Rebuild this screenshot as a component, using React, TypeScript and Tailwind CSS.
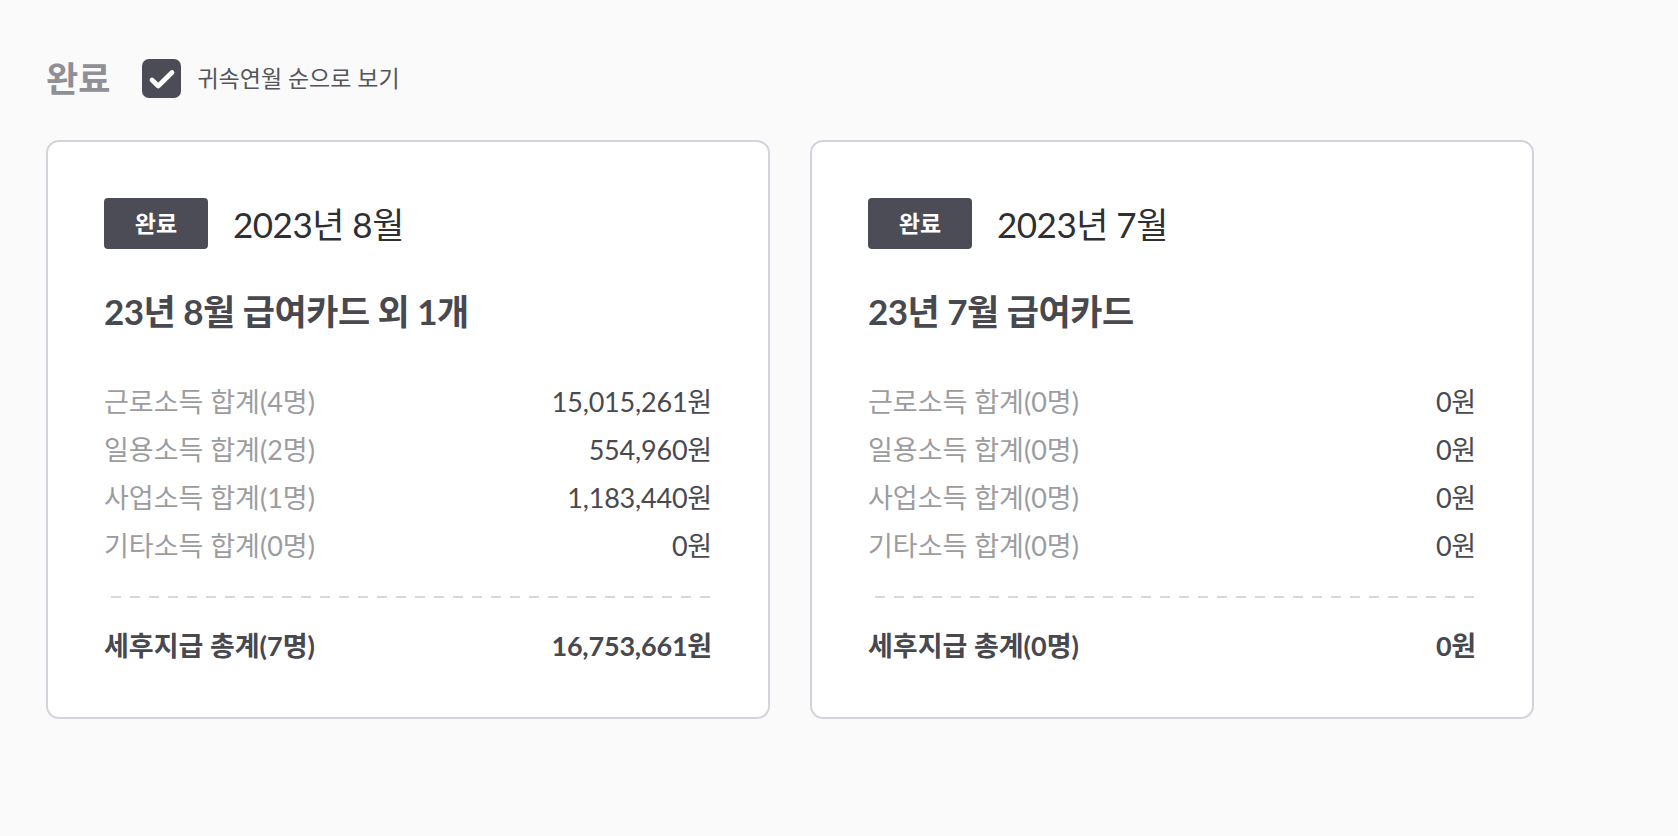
import React from "react";

type Row = { label: string; value: string };

type Card = {
  month: string;
  title: string;
  rows: Row[];
  totalLabel: string;
  total: string;
};

const cards: Card[] = [
  {
    month: "2023년 8월",
    title: "23년 8월 급여카드 외 1개",
    rows: [
      { label: "근로소득 합계(4명)", value: "15,015,261원" },
      { label: "일용소득 합계(2명)", value: "554,960원" },
      { label: "사업소득 합계(1명)", value: "1,183,440원" },
      { label: "기타소득 합계(0명)", value: "0원" },
    ],
    totalLabel: "세후지급 총계(7명)",
    total: "16,753,661원",
  },
  {
    month: "2023년 7월",
    title: "23년 7월 급여카드",
    rows: [
      { label: "근로소득 합계(0명)", value: "0원" },
      { label: "일용소득 합계(0명)", value: "0원" },
      { label: "사업소득 합계(0명)", value: "0원" },
      { label: "기타소득 합계(0명)", value: "0원" },
    ],
    totalLabel: "세후지급 총계(0명)",
    total: "0원",
  },
];

function PayCard({ card }: { card: Card }) {
  return (
    <div className="w-[724px] rounded-[13px] border-2 border-[#d3d3dc] bg-white pl-[56px] pr-[56px] pt-[56px] pb-[52px]">
      <div className="flex items-center gap-[25px]">
        <span className="flex h-[51px] w-[104px] items-center justify-center rounded-[4px] bg-[#4c4c56] text-[23px] font-bold text-white">
          완료
        </span>
        <span className="text-[35px] leading-[40px] tracking-[-0.5px] text-[#2f2f33]">{card.month}</span>
      </div>

      <h2 className="mt-[42px] text-[35px] font-bold leading-[40px] tracking-[-0.5px] text-[#48484f]">
        {card.title}
      </h2>

      <div className="mt-[52px] flex flex-col gap-[10px]">
        {card.rows.map((r) => (
          <div key={r.label} className="flex items-center justify-between text-[27px] leading-[38px]">
            <span className="text-[#9c9c9f]">{r.label}</span>
            <span className="tracking-[-0.2px] text-[#4a4a4e]">{r.value}</span>
          </div>
        ))}
      </div>

      <div className="mt-[31px] ml-[7px] h-[2px] bg-[repeating-linear-gradient(90deg,#d6d6de_0_10px,transparent_10px_19px)]" />

      <div className="mt-[29px] flex items-center justify-between text-[27px] font-bold leading-[38px] text-[#48484f]">
        <span>{card.totalLabel}</span>
        <span className="tracking-[-0.2px]">{card.total}</span>
      </div>
    </div>
  );
}

export default function App() {
  return (
    <div className="min-h-screen bg-[#fafafa] pl-[46px] pt-[59px] font-['Lato','Noto_Sans_CJK_KR',sans-serif]">
      <div className="flex h-[39px] items-center">
        <h1 className="text-[35px] font-bold leading-[39px] text-[#8f8f95]">완료</h1>
        <label className="ml-[32px] flex items-center gap-[16px]">
          <span className="flex h-[39px] w-[39px] items-center justify-center rounded-[7px] bg-[#4c4c56]">
            <svg width="30" height="30" viewBox="0 0 24 24" fill="none">
              <path
                d="M4 12.8l5 4.8L20 6.8"
                stroke="white"
                strokeWidth="3.8"
                strokeLinecap="round"
                strokeLinejoin="round"
              />
            </svg>
          </span>
          <span className="text-[23px] text-[#555559]">귀속연월 순으로 보기</span>
        </label>
      </div>

      <div className="mt-[42px] flex gap-[40px]">
        {cards.map((c) => (
          <PayCard key={c.month} card={c} />
        ))}
      </div>
    </div>
  );
}
